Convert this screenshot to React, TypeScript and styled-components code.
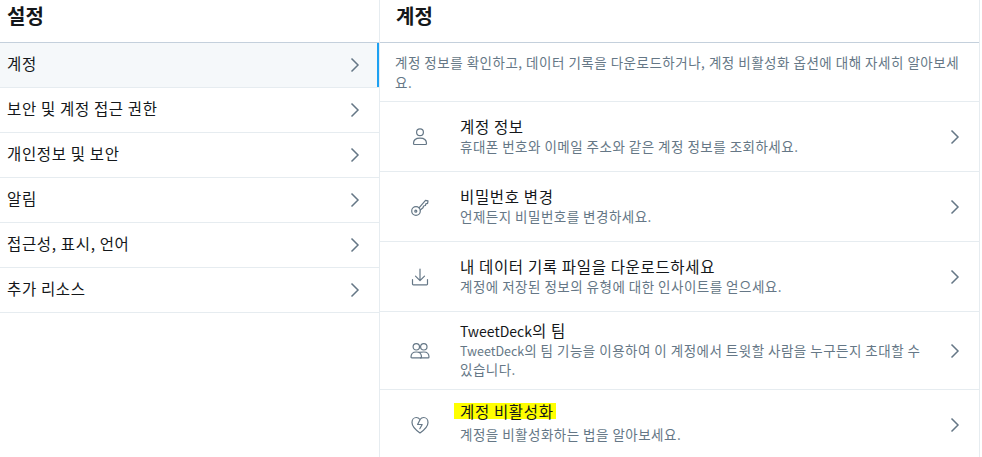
import React, {FC, ReactNode} from 'react';
import styled, {createGlobalStyle} from 'styled-components';

const GlobalStyle = createGlobalStyle`
  html, body {
    margin: 0;
    padding: 0;
    background: #fff;
  }
  body {
    font-family: "Noto Sans CJK KR", "Noto Sans", sans-serif;
    color: #14171a;
    overflow: hidden;
  }
`;

const Latin = styled.span<{$size: number}>`
  font-size: ${p => p.$size}px;
  letter-spacing: 0;
  line-height: 1;
`;

const menuItems = ['계정', '보안 및 계정 접근 권한', '개인정보 및 보안', '알림', '접근성, 표시, 언어', '추가 리소스'];

const Chevron: FC = () => (
  <ChevronIcon viewBox="0 0 10 16" width={10} height={16} fill="none">
    <path d="M1.500 1.500 L8 8 L1.500 14.500" stroke="#657786" strokeWidth="1.500" />
  </ChevronIcon>
);

const icons: Record<string, ReactNode> = {
  user: (
    <>
      <circle cx="10" cy="5.200" r="3.400" />
      <path d="M3.500 16.500c0-3.600 2.800-5.300 6.500-5.300s6.500 1.700 6.500 5.300c0 .6-.4 1-1 1h-11c-.6 0-1-.4-1-1z" />
    </>
  ),
  key: (
    <>
      <circle cx="6" cy="14" r="4.300" />
      <circle cx="5.800" cy="14.200" r="1" />
      <path d="M9 10.800 L15.500 3.300 L18 3.800 L17.600 6.300 L15.800 6.800 L15.400 8.500 L13.600 9 L13 10.800 L10.200 13" />
    </>
  ),
  download: (
    <>
      <path d="M2.500 12.500v4.500c0 .5.300.8.800.8h13.400c.5 0 .8-.3.800-.8v-4.500" />
      <path d="M10 2v11.500M5.500 9.200 10 13.700l4.500-4.500" />
    </>
  ),
  team: (
    <>
      <circle cx="6.300" cy="5.800" r="3.200" />
      <circle cx="13.800" cy="5.800" r="3.200" />
      <path d="M1 16c0-3.400 2.200-5 5.300-5s5.200 1.600 5.200 5c0 .6-.3.900-.9.900H1.900c-.6 0-.9-.3-.9-.9z" />
      <path d="M9 11.400c1.300-.3 3-.4 4.800-.4 3.100 0 5.200 1.600 5.200 5 0 .6-.3.900-.9.900h-7.600" />
    </>
  ),
  heart: (
    <>
      <path d="M10 18c-4-2.800-8-6-8-10.500C2 4.500 4 2.500 6.300 2.500c1.500 0 2.800.8 3.700 2 .9-1.200 2.200-2 3.700-2C16 2.500 18 4.500 18 7.500 18 12 14 15.200 10 18z" />
      <path d="M10 4.800 7.600 9.500h4.600l-2.400 4.200" />
    </>
  ),
};

type Row = {icon: string; title: ReactNode; desc: ReactNode; marked?: boolean; tall?: boolean};

const rows: Row[] = [
  {icon: 'user', title: '계정 정보', desc: '휴대폰 번호와 이메일 주소와 같은 계정 정보를 조회하세요.'},
  {icon: 'key', title: '비밀번호 변경', desc: '언제든지 비밀번호를 변경하세요.'},
  {icon: 'download', title: '내 데이터 기록 파일을 다운로드하세요', desc: '계정에 저장된 정보의 유형에 대한 인사이트를 얻으세요.'},
  {
    icon: 'team',
    title: (
      <>
        <Latin $size={14}>TweetDeck</Latin>의 팀
      </>
    ),
    desc: (
      <>
        <Latin $size={12.5}>TweetDeck</Latin>의 팀 기능을 이용하여 이 계정에서 트윗할 사람을 누구든지 초대할 수 있습니다.
      </>
    ),
    tall: true,
  },
  {icon: 'heart', title: '계정 비활성화', desc: '계정을 비활성화하는 법을 알아보세요.', marked: true},
];

export default function App() {
  return (
    <>
      <GlobalStyle />
      <Page>
        <Sidebar>
          <Header>
            <Heading>설정</Heading>
          </Header>
          <nav>
            {menuItems.map((item, i) => (
              <MenuItem key={item} $active={i === 0}>
                <MenuLabel>{item}</MenuLabel>
                <Chevron />
              </MenuItem>
            ))}
          </nav>
        </Sidebar>
        <Main>
          <Header>
            <Heading>계정</Heading>
          </Header>
          <Intro>
            계정 정보를 확인하고, 데이터 기록을 다운로드하거나, 계정 비활성화 옵션에 대해 자세히 알아보세요.
          </Intro>
          {rows.map(row => (
            <SettingRow key={row.icon} $tall={row.tall}>
              <IconSlot>
                <RowIcon viewBox="0 0 20 20" width={20} height={20} fill="none">
                  {icons[row.icon]}
                </RowIcon>
              </IconSlot>
              <RowText>
                <RowTitle>{row.marked ? <Marker>{row.title}</Marker> : row.title}</RowTitle>
                <RowDesc>{row.desc}</RowDesc>
              </RowText>
              <Chevron />
            </SettingRow>
          ))}
        </Main>
      </Page>
    </>
  );
}

const Page = styled.div`
  display: flex;
  width: 982px;
  height: 457px;
  overflow: hidden;
`;

const Sidebar = styled.aside`
  width: 379px;
  flex: none;
  border-right: 1px solid #e6ecf0;
`;

const Main = styled.main`
  width: 599px;
  flex: none;
  border-right: 1px solid #e6ecf0;
`;

const Header = styled.header`
  height: 42px;
  box-sizing: content-box;
  border-bottom: 1px solid #c4d0dc;
  display: flex;
  align-items: center;
`;

const Heading = styled.h2`
  margin: -10px 0 0;
  font-size: 20px;
  line-height: 26px;
  font-weight: 700;
  padding-left: 7px;
  ${Main} & {
    padding-left: 16px;
  }
`;

const MenuItem = styled.div<{$active?: boolean}>`
  height: 44px;
  box-sizing: content-box;
  display: flex;
  align-items: center;
  justify-content: space-between;
  padding: 0 19px 0 7px;
  border-bottom: 1px solid #e6ecf0;
  background: ${p => (p.$active ? '#f5f8fa' : '#fff')};
  box-shadow: ${p => (p.$active ? 'inset -2px 0 0 #1da1f2' : 'none')};
`;

const MenuLabel = styled.span`
  font-size: 15.500px;
  letter-spacing: 0.650px;
  line-height: 20px;
  margin-top: -4px;
`;

const ChevronIcon = styled.svg`
  flex: none;
  display: block;
`;

const Intro = styled.p`
  margin: 0;
  box-sizing: border-box;
  height: 59px;
  padding: 9px 16px 0 15px;
  font-size: 13.500px;
  letter-spacing: 0.500px;
  line-height: 20px;
  color: #657786;
  border-bottom: 1px solid #e6ecf0;
`;

const SettingRow = styled.div<{$tall?: boolean}>`
  box-sizing: border-box;
  height: ${p => (p.$tall ? 78 : 70)}px;
  display: flex;
  align-items: center;
  padding: 0 19px 0 30px;
  border-bottom: 1px solid #e6ecf0;
  &:last-child {
    border-bottom: none;
  }
`;

const IconSlot = styled.div`
  width: 50px;
  flex: none;
`;

const RowIcon = styled.svg`
  display: block;
  stroke: #657786;
  stroke-width: 1.200;
  stroke-linecap: round;
  stroke-linejoin: round;
`;

const RowText = styled.div`
  flex: 1;
  min-width: 0;
  padding-right: 17px;
`;

const RowTitle = styled.div`
  font-size: 15.500px;
  letter-spacing: 0.650px;
  line-height: 19px;
  margin: -1px 0 1px;
`;

const RowDesc = styled.div`
  font-size: 13.500px;
  letter-spacing: 0.480px;
  line-height: 19px;
  color: #657786;
`;

const Marker = styled.span`
  display: inline-block;
  background: #ffff00;
  line-height: 16px;
  padding: 0 2px 0 6px;
  margin: -2px 0 2px -6px;
  vertical-align: top;
`;
